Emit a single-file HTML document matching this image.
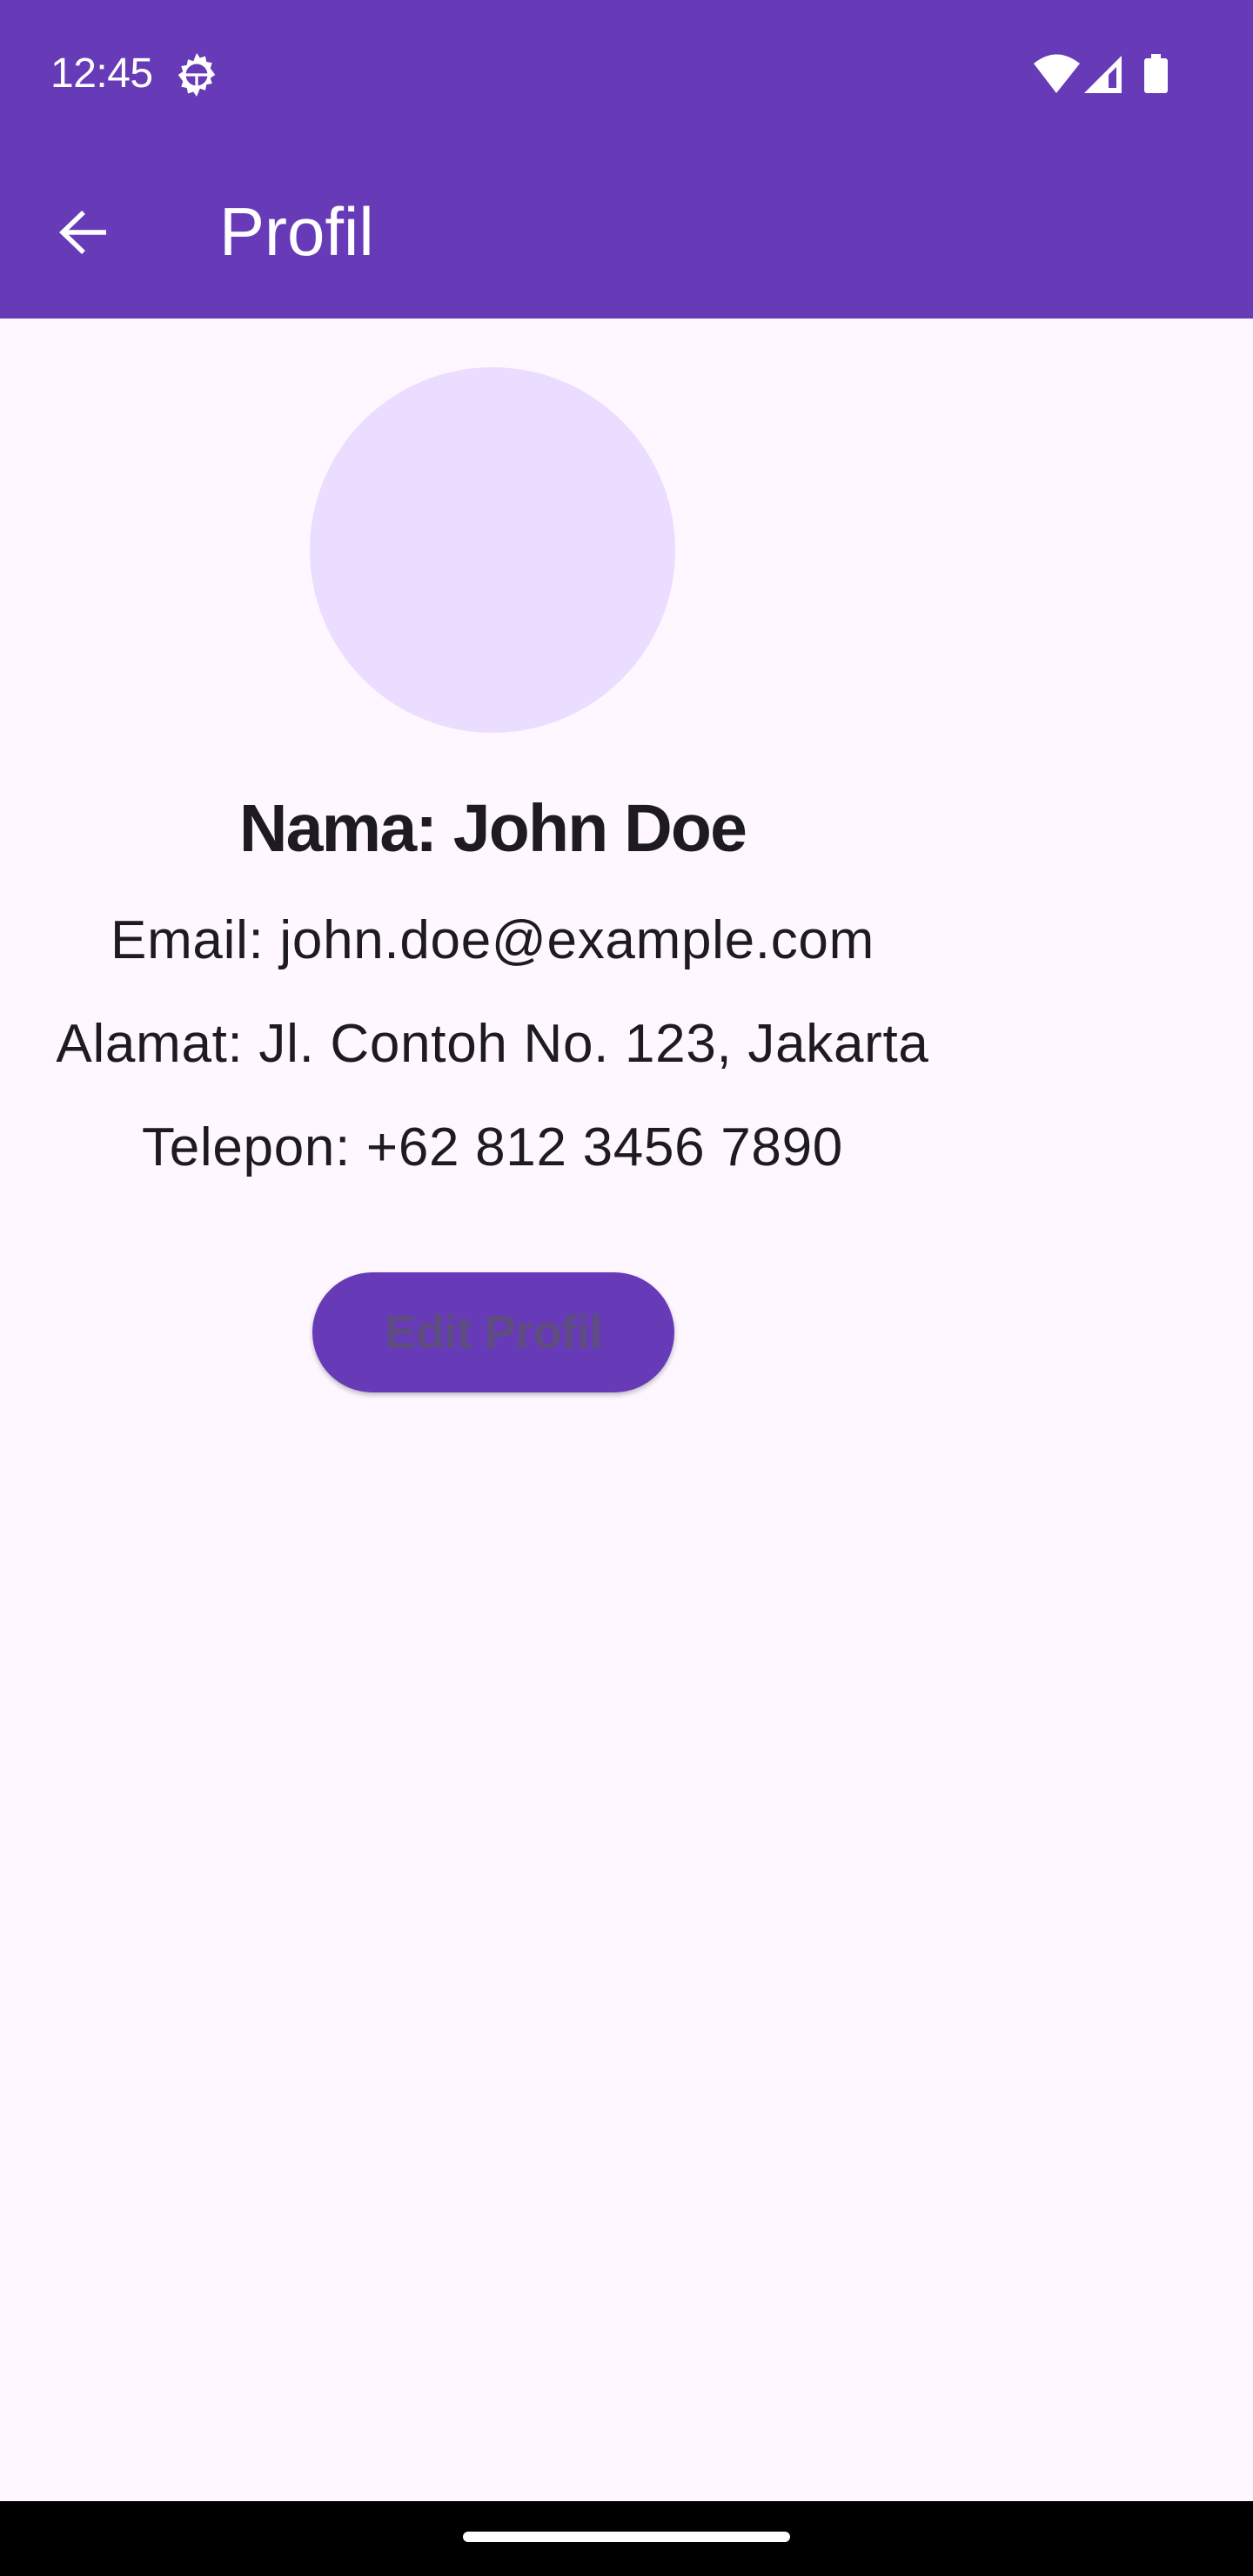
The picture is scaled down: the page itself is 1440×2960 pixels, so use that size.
<!DOCTYPE html>
<html><head><meta charset="utf-8"><style>
html,body{margin:0;padding:0}
body{width:1440px;height:2960px;background:#FEF7FF;position:relative;overflow:hidden;font-family:"Liberation Sans",sans-serif}
.top{position:absolute;left:0;top:0;width:1440px;height:366px;background:#673AB7}
.t{position:absolute;white-space:nowrap;color:#1D1B20;left:0;width:1132px;text-align:center}
</style></head><body>
<div class="top"></div>
<div style="position:absolute;left:58px;top:56px;color:#fff;font-size:48px;line-height:58px;letter-spacing:-0.5px">12:45</div>
<svg style="position:absolute;left:196px;top:56px" width="60" height="60" viewBox="0 0 24 24"><path fill="#fff" d="M12 2l1.5 2.2 2.5-.8.5 2.6 2.6.5-.8 2.5L20.5 12l-2.2 1.5.8 2.5-2.6.5-.5 2.6-2.5-.8L12 22l-1.5-2.2-2.5.8-.5-2.6-2.6-.5.8-2.5L3.5 12l2.2-1.5-.8-2.5 2.6-.5.5-2.6 2.5.8z"/><circle cx="12" cy="12" r="5" fill="#673AB7"/><path d="M7 12h10M12 12v5" stroke="#fff" stroke-width="1.3"/></svg>
<svg style="position:absolute;left:1186px;top:60px" width="160" height="50" viewBox="0 0 160 50">
<path fill="#fff" d="M2 13 Q28 -8 55 13 L28 47 Z"/>
<path fill="#fff" d="M60 47 L103 4 L103 47 Z M88 26 L88 41 L97 41 L97 17 Z" fill-rule="evenodd"/>
<rect x="129" y="7" width="27" height="40" rx="3" fill="#fff"/><rect x="137" y="2" width="11" height="7" fill="#fff"/>
</svg>
<svg style="position:absolute;left:66px;top:240px" width="60" height="54" viewBox="0 0 60 54"><path d="M56 27H8M30 4L6 27l24 23" stroke="#fff" stroke-width="5.5" fill="none"/></svg>
<div style="position:absolute;left:252px;top:218px;color:#fff;font-size:78px;line-height:96px">Profil</div>
<div style="position:absolute;left:356px;top:422px;width:420px;height:420px;border-radius:50%;background:#EADDFF"></div>
<div class="t" style="top:902px;font-size:77px;line-height:100px;font-weight:bold;letter-spacing:-1.8px">Nama: John Doe</div>
<div class="t" style="top:1044px;font-size:62px;line-height:74px;letter-spacing:0.7px">Email: john.doe@example.com</div>
<div class="t" style="top:1163px;font-size:62px;line-height:74px;letter-spacing:0.7px">Alamat: Jl. Contoh No. 123, Jakarta</div>
<div class="t" style="top:1282px;font-size:62px;line-height:74px;letter-spacing:0.7px">Telepon: +62 812 3456 7890</div>
<div style="position:absolute;left:359px;top:1462px;width:416px;height:138px;border-radius:69px;background:#673AB7;box-shadow:0 3px 6px rgba(0,0,0,.25);color:#5E4D80;font-weight:bold;font-size:54px;line-height:138px;text-align:center;letter-spacing:-0.5px">Edit Profil</div>
<div style="position:absolute;left:0;top:2874px;width:1440px;height:86px;background:#000"></div>
<div style="position:absolute;left:532px;top:2909px;width:376px;height:12px;border-radius:6px;background:#fff"></div>
</body></html>
